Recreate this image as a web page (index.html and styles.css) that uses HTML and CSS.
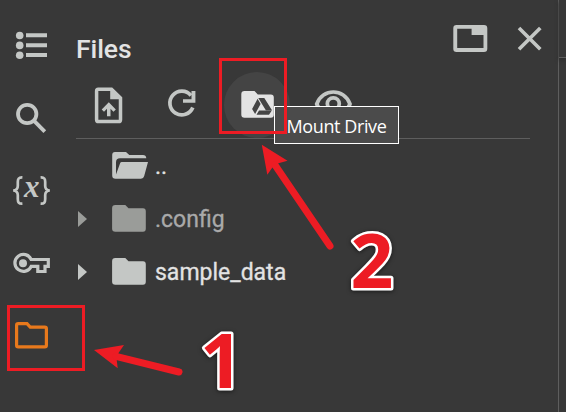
FILE: index.html
```html
<!DOCTYPE html>
<html lang="en">
<head>
<meta charset="utf-8">
<title>Files</title>
<link rel="stylesheet" href="styles.css">
</head>
<body>
<div class="app">
  <nav class="rail">
    <svg viewBox="12 9 40 72"><g fill="currentColor"><circle cx="19.7" cy="35.5" r="3.8"/><circle cx="19.7" cy="45.4" r="3.8"/><circle cx="19.7" cy="55.2" r="3.8"/><path d="M26 33.3h21v4H26zM26 43.2h21v4H26zM26 53h21v4H26z"/></g></svg>
    <svg viewBox="12 81 40 72"><g fill="none" stroke="currentColor" stroke-width="3.8"><circle cx="27.2" cy="114" r="9.2"/><path d="M33.6 120.4L44.8 131.6"/></g></svg>
    <svg viewBox="12 153 40 72"><g fill="none" stroke="currentColor" stroke-width="2.7"><path d="M22.4 177.4C18.6 177.2 17.8 179 17.8 182v4c0 3-1.2 4.3-4.6 4.5c3.4.2 4.6 1.6 4.6 4.6v4c0 3 .8 4.8 4.6 4.6M40.6 177.4c3.8-.2 4.6 1.6 4.6 4.6v4c0 3 1.2 4.3 4.6 4.5c-3.4.2-4.6 1.6-4.6 4.6v4c0 3-.8 4.8-4.6 4.6"/></g><text class="variable" x="24" y="197.4">x</text></svg>
    <svg viewBox="12 225 40 72"><g fill="none" stroke="currentColor" stroke-width="3.2" stroke-linejoin="miter"><path d="M31.2 259.5H48.3v6.8H45v5.2H37.8v-5.2H31.2A8.5 8.5 0 1 1 31.2 259.5z"/></g><circle cx="23" cy="263.3" r="4" fill="currentColor"/></svg>
    <svg class="active" viewBox="12 297 40 72"><path d="M18.2 323.7h8.8l3.2 3.4h14.6q1.6 0 1.6 1.6v16.6q0 1.6-1.6 1.6H18.2q-1.6 0-1.6-1.6v-20q0-1.6 1.6-1.6z" fill="none" stroke="currentColor" stroke-width="3.2"/></svg>
  </nav>
  <main class="panel">
    <header class="header">
      <h1>Files</h1>
      <svg width="96" height="40" viewBox="450 18 96 40"><path fill="currentColor" fill-rule="evenodd" d="M456.500 25h27.500q3.300 0 3.300 3.300v20.400q0 3.300-3.300 3.300h-27.500q-3.200 0-3.200-3.300V28.300q0-3.300 3.200-3.300zM457.200 28.700v19.400h26.300V35H471.600v-6.300z"/><path d="M519 28L540.300 49.300M540.300 28L519 49.300" stroke="currentColor" stroke-width="3.600"/></svg>
    </header>
    <div class="toolbar">
      <svg class="upload" viewBox="92 80 34 48"><path d="M98.200 89.300h13.300l9 8.600v21.800q0 1.900-1.900 1.900H98.500q-1.900 0-1.900-1.900V91.200q0-1.900 1.600-1.900z" fill="none" stroke="currentColor" stroke-width="3.500"/><path fill="currentColor" d="M110.200 88l12 11.300h-12zM108.800 102.200l7 7.300-2.300 2.200-3-2.900v7.400H107v-7.400l-3 2.900-2.300-2.200z"/></svg>
      <svg class="refresh" viewBox="162 80 40 48"><path d="M191 95.500A11.900 11.900 0 1 0 192.800 107.500" fill="none" stroke="currentColor" stroke-width="3.700"/><path fill="currentColor" d="M195.400 91v11.700H183V99.200h8.500V91z"/></svg>
      <div class="mount">
        <svg viewBox="224 72 66 66"><path fill="#e3e3e3" d="M244.500 91h10l3.300 3.500h13q3 0 3 3v17q0 3.300-3 3.300h-26.300q-3.200 0-3.200-3.300V94.200q0-3.200 3.200-3.200z"/><path fill="#444" d="M258.300 98h6l7.700 12.200h-6.200zM257.600 98.800l3 5.300-5.500 9.900-3-5.100zM259 110.600h12.800l-2.800 4.200h-12.500z"/></svg>
      </div>
      <svg class="preview" viewBox="312 82 42 44"><g fill="none" stroke="currentColor" stroke-width="3.700"><path d="M316.700 104C322.500 88 344.200 88 350 104C344.200 120 322.500 120 316.700 104z"/><circle cx="333.300" cy="103.800" r="6"/></g></svg>
      <div class="tooltip">Mount Drive</div>
    </div>
    <ul class="files">
      <li><span class="arrow-slot"></span><svg class="folder" viewBox="0 0 38 30"><path fill="currentColor" fill-rule="evenodd" d="M3 1h11l3.300 3H31q3 0 3.300 3.300H8q-4 0-4 4V23.500L8.200 12q.4-1 1.500-1H36L32.200 25q-.7 2.700-3.200 2.700H3.500Q.2 27.700.2 24.500V4Q.2 1 3 1z"/></svg><span class="name">..</span></li>
      <li class="hidden-file"><span class="arrow-slot"><i></i></span><svg class="folder" viewBox="0 0 38 30"><path fill="currentColor" d="M3.300 1h10l3.200 3.300H31q2.800 0 2.800 3v17.400q0 3-2.800 3H3.300q-3.200 0-3.200-3V4.200Q.1 1 3.300 1z"/></svg><span class="name">.config</span></li>
      <li><span class="arrow-slot"><i></i></span><svg class="folder" viewBox="0 0 38 30"><path fill="currentColor" d="M3.300 1h10l3.200 3.300H31q2.800 0 2.800 3v17.400q0 3-2.800 3H3.300q-3.200 0-3.200-3V4.200Q.1 1 3.300 1z"/></svg><span class="name">sample_data</span></li>
    </ul>
  </main>
  <aside class="edge"><div></div></aside>
  <svg class="annotations" viewBox="0 0 566 412">
    <g fill="none" stroke="#ed1c24" stroke-width="3"><rect x="8.500" y="306.500" width="75" height="63"/><rect x="220.500" y="59.500" width="65" height="73"/></g>
    <g fill="#ed1c24"><path d="M94 350l30-5-5.500 8-1.800 6.800 1 8.500zM261.800 144.800l25.700 16-9 2.500-6.300 4.500-4.900 7z"/></g>
    <path d="M116 356.300L179 372M275 165L330 246" stroke="#ed1c24" stroke-width="7" stroke-linecap="round"/>
    <text class="number" x="200" y="388">1</text>
    <text class="number" x="350.500" y="287.500">2</text>
  </svg>
</div>
</body>
</html>
```
FILE: styles.css
```css
* { box-sizing: border-box; }
body { margin: 0; background: #383838; color: #c4c7c5; font-family: Roboto, sans-serif; }
svg { display: block; flex: none; }
.app { position: relative; display: flex; width: 566px; height: 412px; overflow: hidden; }
.rail { width: 76px; padding: 9px 0 0 12px; }
.rail svg { width: 40px; height: 72px; }
.rail .active { color: #e8791c; }
.variable { font: italic bold 31px "Liberation Serif", serif; fill: currentColor; }
.panel { width: 482px; }
.header { height: 72px; display: flex; justify-content: space-between; padding: 18px 12px 0 0; }
h1 { margin: 14px 0 0; font: 500 26.500px/34px Roboto, sans-serif; letter-spacing: -0.100px; color: #e3e3e3; }
.toolbar { position: relative; width: 454px; height: 67px; display: flex; align-items: flex-start; border-bottom: 1px solid #5e5e5e; }
.upload { width: 34px; height: 48px; margin: 8px 0 0 16px; }
.refresh { width: 40px; height: 48px; margin: 8px 0 0 36px; }
.mount { width: 66px; height: 66px; margin-left: 22px; border-radius: 50%; background: #444; }
.preview { width: 42px; height: 44px; margin: 10px 0 0 22px; }
.tooltip { position: absolute; left: 198px; top: 34px; width: 125px; height: 38px; border: 1px solid #fff; background: #4b4b4b; color: #fff; font: 18px/38px "Open Sans", sans-serif; text-align: center; white-space: nowrap; letter-spacing: -0.400px; }
.files { list-style: none; margin: 0; padding: 0; }
.files li { height: 53px; display: flex; align-items: center; color: #c4c7c5; }
.arrow-slot { width: 36px; padding-left: 2px; }
.arrow-slot i { display: block; width: 0; border-left: 9px solid currentColor; border-top: 8.500px solid transparent; border-bottom: 8.500px solid transparent; }
.folder { width: 38px; height: 30px; }
.name { padding: 2px 0 0 5px; font-size: 23px; line-height: 30px; color: #e3e3e3; -webkit-text-stroke: 0.300px currentColor; }
.files .hidden-file { color: #9a9c99; }
.hidden-file .name { color: #a9a9a9; }
.edge { width: 8px; border-left: 1px solid #5e5e5e; }
.edge div { height: 58px; border-bottom: 1px solid #5e5e5e; box-shadow: 0 2px 4px #2c2c2c; }
.annotations { position: absolute; inset: 0; width: 566px; height: 412px; }
.number { font: 700 75px "Open Sans", sans-serif; fill: #ed1c24; stroke: #fff; stroke-width: 5px; stroke-linejoin: round; paint-order: stroke; filter: drop-shadow(0 1px 2px #0008); }
```
